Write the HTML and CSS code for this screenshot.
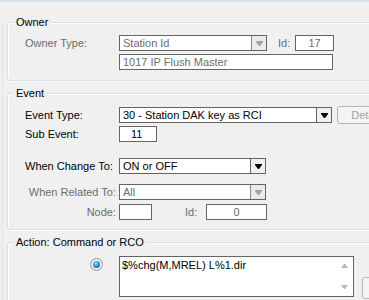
FILE: index.html
```html
<!DOCTYPE html>
<html lang="en">
<head>
    <meta charset="UTF-8">
    <meta name="viewport" content="width=device-width, initial-scale=1.0">
    <title>Event Action</title>
    <link rel="stylesheet" href="styles.css">
</head>
<body>
    <div class="topline"></div>
    <div class="panel">
        <div class="group owner">
            <span class="legend">Owner</span>
            <div class="row">
                <span class="lbl dis">Owner Type:</span>
                <div class="combo dis w-owner">
                    <span class="combo-text">Station Id</span>
                    <span class="combo-btn"><svg width="7" height="5" viewBox="0 0 7 5"><path d="M0 0h7v1l-3 4h-1l-3-4z"/></svg></span>
                </div>
                <span class="lbl-id dis">Id:</span>
                <div class="field dis center w-id">17</div>
            </div>
            <div class="row gap3">
                <span class="lbl"></span>
                <div class="field dis w-name">1017 IP Flush Master</div>
            </div>
        </div>

        <div class="group event">
            <span class="legend">Event</span>
            <div class="row">
                <span class="lbl">Event Type:</span>
                <div class="combo w-type">
                    <span class="combo-text">30 - Station DAK key as RCI</span>
                    <span class="combo-btn"><svg width="7" height="5" viewBox="0 0 7 5"><path d="M0 0h7v1l-3 4h-1l-3-4z"/></svg></span>
                </div>
                <button class="btn btn-details" disabled>Details</button>
            </div>
            <div class="row gap3">
                <span class="lbl">Sub Event:</span>
                <div class="field w-sub">11</div>
            </div>
            <div class="row gap16">
                <span class="lbl">When Change To:</span>
                <div class="combo w-change">
                    <span class="combo-text">ON or OFF</span>
                    <span class="combo-btn"><svg width="7" height="5" viewBox="0 0 7 5"><path d="M0 0h7v1l-3 4h-1l-3-4z"/></svg></span>
                </div>
            </div>
            <div class="row gap10">
                <span class="lbl dis right">When Related To:</span>
                <div class="combo dis w-change">
                    <span class="combo-text">All</span>
                    <span class="combo-btn"><svg width="7" height="5" viewBox="0 0 7 5"><path d="M0 0h7v1l-3 4h-1l-3-4z"/></svg></span>
                </div>
            </div>
            <div class="row gap4">
                <span class="lbl dis right">Node:</span>
                <div class="field w-node"></div>
                <span class="lbl-node-id dis">Id:</span>
                <div class="field dis center w-nodeid">0</div>
            </div>
        </div>

        <div class="group action">
            <span class="legend">Action: Command or RCO</span>
            <div class="action-row">
                <span class="radio"></span>
                <div class="memo">
                    <div class="memo-text">$%chg(M,MREL) L%1.dir</div>
                    <div class="memo-scroll">
                        <svg width="7" height="4" viewBox="0 0 7 4"><path d="M3 0h1l3 4h-7z"/></svg>
                        <svg width="7" height="4" viewBox="0 0 7 4"><path d="M0 0h7l-3 4h-1z"/></svg>
                    </div>
                </div>
                <button class="btn btn-side" disabled>...</button>
            </div>
        </div>
    </div>
</body>
</html>
```

FILE: styles.css
```css
body {
    margin: 0;
    background: #f0f0f0;
    font-family: "Liberation Sans", Arial, sans-serif;
    font-size: 11px;
    color: #000;
    overflow: hidden;
}
.topline {
    height: 2px;
    background: #d9e3ee;
}
.panel {
    margin: 20px 0 0 2px;
    padding-left: 4px;
    border-left: 1px solid #dde4ea;
    width: 420px;
}
.group {
    position: relative;
    border: 1px solid #d5dfe5;
    border-radius: 3px;
    box-shadow: inset 1px 1px 0 #fff, 1px 1px 0 #fff;
    padding: 12px 0 10px 17px;
}
.event {
    margin-top: 12px;
    padding: 13px 0 9px 17px;
}
.action {
    margin-top: 12px;
    padding: 13px 0 20px 17px;
}
.legend {
    position: absolute;
    top: -7px;
    left: 5px;
    padding: 0 2px 0 3px;
    line-height: 13px;
    background: #f0f0f0;
}
.row {
    display: flex;
    align-items: center;
    height: 16px;
}
.gap3 { margin-top: 3px; }
.gap4 { margin-top: 4px; }
.gap10 { margin-top: 10px; }
.gap16 { margin-top: 16px; }
.lbl {
    width: 94px;
    flex: none;
}
.lbl.right {
    text-align: right;
    padding-right: 3px;
    box-sizing: border-box;
}
.dis {
    color: #6d6d6d;
}
.lbl-id {
    margin-left: 11px;
    width: 17px;
}
.lbl-node-id {
    margin-left: 33px;
    width: 21px;
}
.combo, .field {
    box-sizing: border-box;
    height: 16px;
    border: 1px solid #646464;
    background: #fff;
    line-height: 14px;
    flex: none;
}
.combo {
    display: flex;
}
.combo-text {
    flex: 1;
    padding-left: 3px;
    white-space: nowrap;
    overflow: hidden;
}
.combo-btn {
    width: 14px;
    border-left: 1px solid #646464;
    background: #f0f0f0;
    display: flex;
    align-items: center;
    justify-content: center;
}
.combo-btn svg {
    fill: #000;
}
.combo.dis .combo-btn {
    background: #ebebeb;
    border-left-color: #8a8a8a;
}
.combo.dis .combo-btn svg {
    fill: #a3a3a3;
}
.field {
    padding-left: 3px;
}
.field.center {
    text-align: center;
    padding-left: 0;
}
.w-owner { width: 148px; }
.w-id { width: 39px; }
.w-name { width: 214px; }
.w-type { width: 213px; }
.w-sub { width: 38px; padding-left: 11px; }
.w-change { width: 147px; }
.w-node { width: 33px; }
.w-nodeid { width: 61px; }
.btn {
    font-family: inherit;
    font-size: 11px;
    box-sizing: border-box;
    border: 1px solid #b5b5b5;
    border-radius: 3px;
    background: #f4f4f4;
    color: #a3a3a3;
    padding: 0;
    flex: none;
}
.btn-details {
    margin-left: 5px;
    width: 62px;
    height: 18px;
}
.action-row {
    display: flex;
    align-items: flex-start;
}
.radio {
    box-sizing: border-box;
    width: 13px;
    height: 13px;
    margin: 2px 0 0 65px;
    border-radius: 50%;
    border: 1px solid #9a9a9a;
    background: radial-gradient(circle, #fafafa 0, #e4e4e4 100%);
    display: flex;
    align-items: center;
    justify-content: center;
    flex: none;
}
.radio::after {
    content: "";
    width: 7px;
    height: 7px;
    border-radius: 50%;
    background: radial-gradient(circle at 40% 35%, #9be6ff 0, #2a95e4 45%, #0b3f8c 100%);
}
.memo {
    display: flex;
    box-sizing: border-box;
    margin-left: 16px;
    width: 235px;
    height: 41px;
    border: 1px solid #646464;
    background: #fff;
    flex: none;
}
.memo-text {
    flex: 1;
    padding: 2px 2px;
    line-height: 13px;
}
.memo-scroll {
    width: 17px;
    display: flex;
    flex-direction: column;
    justify-content: space-between;
    align-items: center;
    padding: 7px 0 7px;
}
.memo-scroll svg {
    fill: #b9b9b9;
}
.btn-side {
    margin: 21px 0 0 8px;
    width: 30px;
    height: 22px;
    color: transparent;
}
```
